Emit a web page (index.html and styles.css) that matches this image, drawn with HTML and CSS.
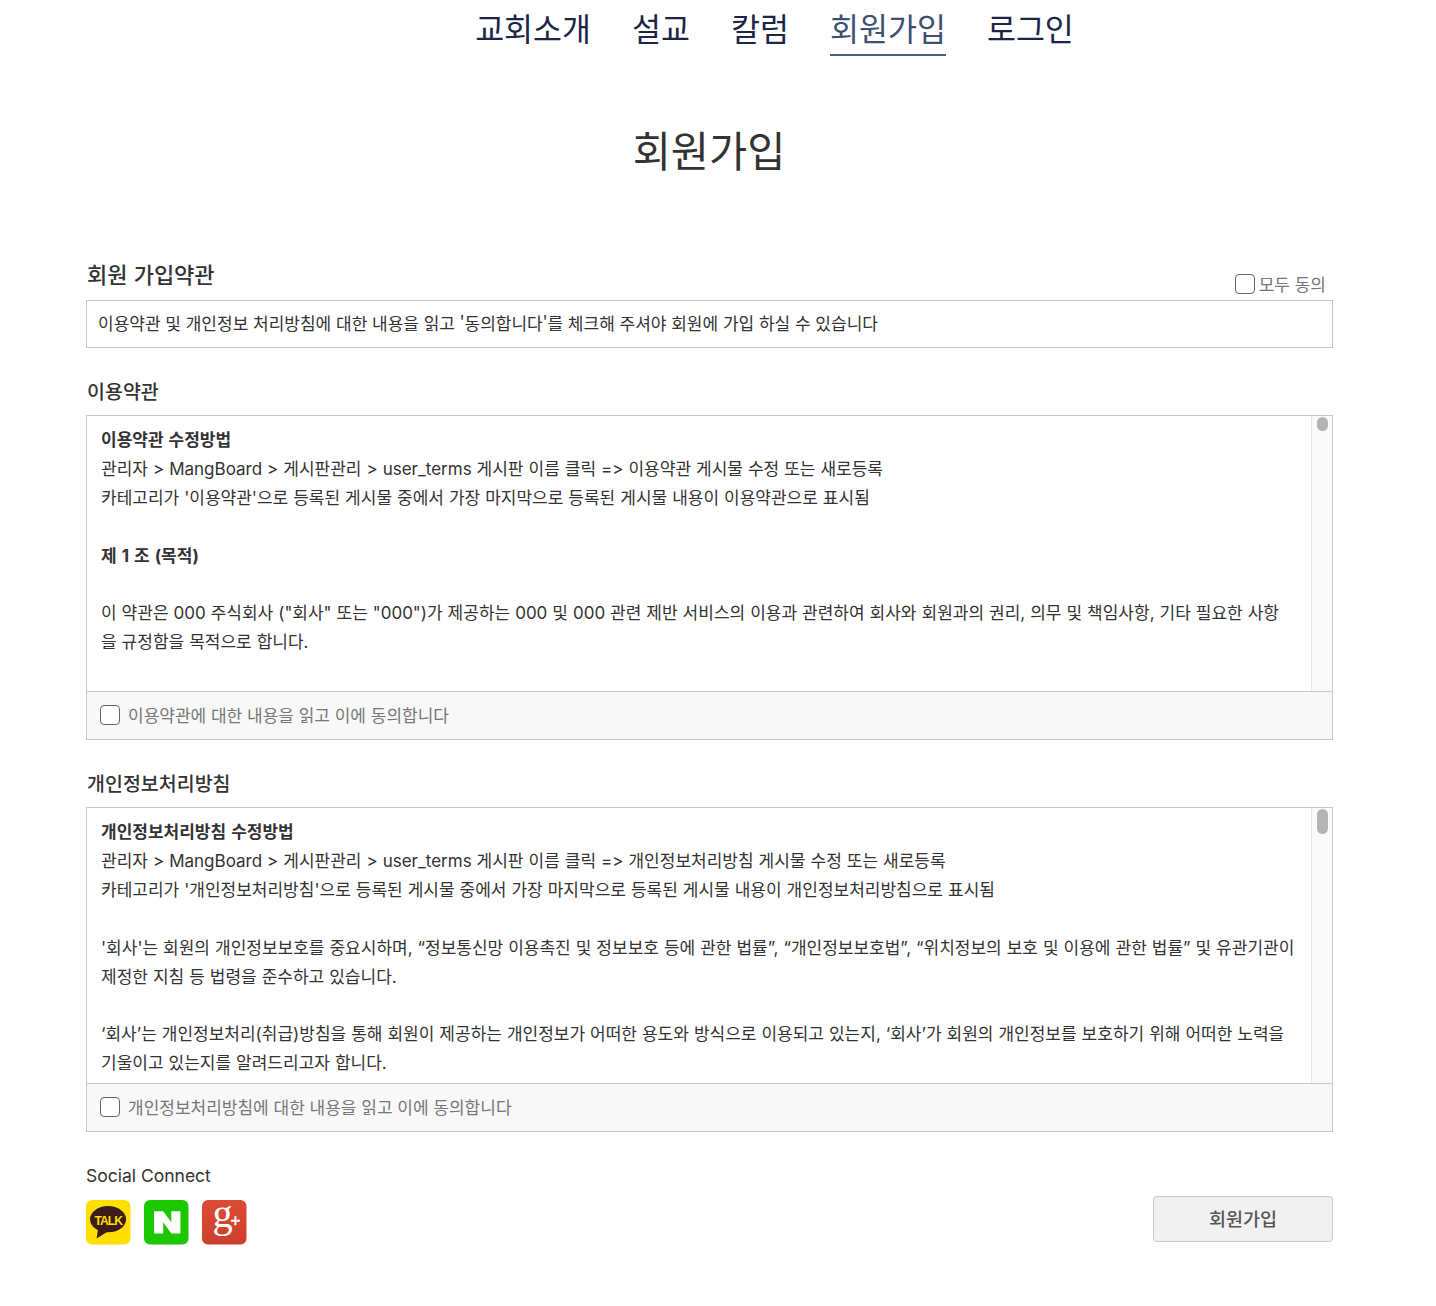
FILE: index.html
```html
<!DOCTYPE html>
<html lang="ko">
<head>
<meta charset="utf-8">
<title>회원가입</title>
<link rel="stylesheet" href="styles.css">
</head>
<body>
<nav class="nav">
  <a class="nav-item">교회소개</a>
  <a class="nav-item">설교</a>
  <a class="nav-item">칼럼</a>
  <a class="nav-item active">회원가입</a>
  <a class="nav-item">로그인</a>
</nav>
<h1 class="page-title">회원가입</h1>
<main class="content">
  <section class="terms-head">
    <div class="head-row">
      <h2 class="section-title lead-title">회원 가입약관</h2>
      <label class="all-agree"><span class="check small"></span>모두 동의</label>
    </div>
    <div class="notice">이용약관 및 개인정보 처리방침에 대한 내용을 읽고 '동의합니다'를 체크해 주셔야 회원에 가입 하실 수 있습니다</div>
  </section>

  <section class="terms">
    <h2 class="section-title">이용약관</h2>
    <div class="panel">
      <div class="scroll-row">
        <div class="scroll-body">
          <p><b>이용약관 수정방법</b><br>관리자 &gt; MangBoard &gt; 게시판관리 &gt; user_terms 게시판 이름 클릭 =&gt; 이용약관 게시물 수정 또는 새로등록<br>카테고리가 '이용약관'으로 등록된 게시물 중에서 가장 마지막으로 등록된 게시물 내용이 이용약관으로 표시됨</p>
          <p><b>제 1 조 (목적)</b></p>
          <p>이 약관은 000 주식회사 ("회사" 또는 "000")가 제공하는 000 및 000 관련 제반 서비스의 이용과 관련하여 회사와 회원과의 권리, 의무 및 책임사항, 기타 필요한 사항<br>을 규정함을 목적으로 합니다.</p>
        </div>
        <div class="scrollbar"><span class="thumb thumb-short"></span></div>
      </div>
      <label class="agree"><span class="check"></span>이용약관에 대한 내용을 읽고 이에 동의합니다</label>
    </div>
  </section>

  <section class="terms">
    <h2 class="section-title">개인정보처리방침</h2>
    <div class="panel">
      <div class="scroll-row">
        <div class="scroll-body">
          <p><b>개인정보처리방침 수정방법</b><br>관리자 &gt; MangBoard &gt; 게시판관리 &gt; user_terms 게시판 이름 클릭 =&gt; 개인정보처리방침 게시물 수정 또는 새로등록<br>카테고리가 '개인정보처리방침'으로 등록된 게시물 중에서 가장 마지막으로 등록된 게시물 내용이 개인정보처리방침으로 표시됨</p>
          <p>'회사'는 회원의 개인정보보호를 중요시하며, “정보통신망 이용촉진 및 정보보호 등에 관한 법률”, “개인정보보호법”, “위치정보의 보호 및 이용에 관한 법률” 및 유관기관이<br>제정한 지침 등 법령을 준수하고 있습니다.</p>
          <p>‘회사’는 개인정보처리(취급)방침을 통해 회원이 제공하는 개인정보가 어떠한 용도와 방식으로 이용되고 있는지, ‘회사’가 회원의 개인정보를 보호하기 위해 어떠한 노력을<br>기울이고 있는지를 알려드리고자 합니다.</p>
        </div>
        <div class="scrollbar"><span class="thumb thumb-long"></span></div>
      </div>
      <label class="agree"><span class="check"></span>개인정보처리방침에 대한 내용을 읽고 이에 동의합니다</label>
    </div>
  </section>

  <section class="foot">
    <div class="social">
      <div class="social-label">Social Connect</div>
      <div class="social-icons">
        <svg class="icon" viewBox="0 0 44 44" role="img" aria-label="KakaoTalk">
          <rect width="44" height="44" rx="6" fill="#ffde00"/>
          <ellipse cx="21.800" cy="19" rx="17.800" ry="13" fill="#3b1d1a"/>
          <path d="M12 28 L10.500 38 L22 31 Z" fill="#3b1d1a"/>
          <text x="22" y="24.800" class="talk">TALK</text>
        </svg>
        <svg class="icon" viewBox="0 0 44 44" role="img" aria-label="Naver">
          <rect width="44" height="44" rx="6" fill="#1ec800"/>
          <path d="M10 11 H19 L27 22 V11 H36 V33 H27 L19 22 V33 H10 Z" fill="#fff"/>
        </svg>
        <svg class="icon" viewBox="0 0 44 44" role="img" aria-label="Google Plus">
          <defs>
            <linearGradient id="gp" x1="0" y1="0" x2="0" y2="1">
              <stop offset="0" stop-color="#dc4b35"/>
              <stop offset="1" stop-color="#cd3f2c"/>
            </linearGradient>
          </defs>
          <rect width="44" height="44" rx="6" fill="url(#gp)"/>
          <text x="10.500" y="26.500" class="gplus">g</text>
          <path d="M32 16 h2 v3.500 h3.500 v2 h-3.500 v3.500 h-2 v-3.500 h-3.500 v-2 h3.500 Z" fill="#fff"/>
        </svg>
      </div>
    </div>
    <button class="submit" type="button">회원가입</button>
  </section>
</main>
</body>
</html>
```
FILE: styles.css
```css
* { box-sizing: border-box; }
html, body { margin: 0; padding: 0; background: #fff; }
body {
  font-family: "Noto Sans CJK KR", "Noto Sans", sans-serif;
  color: #333;
  height: 1306px;
  overflow: hidden;
}
.nav {
  display: flex;
  justify-content: center;
  gap: 41px;
  height: 56px;
  padding-left: 113px;
}
.nav-item {
  font-size: 31.500px;
  line-height: 54px;
  height: 56px;
  color: #1d2547;
}
.nav-item.active {
  color: #3d5170;
  border-bottom: 2px solid #4a5f7f;
}
.page-title {
  margin: 0;
  padding-top: 61px;
  padding-right: 18px;
  font-size: 41.500px;
  line-height: 64px;
  font-weight: 400;
  text-align: center;
  color: #333;
}
.content {
  margin: 0 103px 0 86px;
  padding-top: 79px;
}
.head-row {
  display: flex;
  justify-content: space-between;
  align-items: flex-end;
}
.section-title {
  margin: 0;
  padding-left: 1px;
  font-size: 19.500px;
  line-height: 32px;
  height: 40px;
  font-weight: 500;
  color: #333;
}
.lead-title {
  font-size: 22px;
  line-height: 26px;
}
.all-agree {
  display: flex;
  align-items: center;
  gap: 4px;
  font-size: 17px;
  line-height: 24px;
  color: #777;
  padding-right: 7px;
  margin-bottom: 4px;
}
.check {
  flex: none;
  width: 20px;
  height: 20px;
  border: 1.500px solid #666;
  border-radius: 4px;
  background: #fff;
}
.notice {
  height: 48px;
  border: 1px solid #c8c8c8;
  padding: 0 11px;
  font-size: 17px;
  line-height: 43px;
  color: #333;
}
.terms { margin-top: 27px; }
.panel { border: 1px solid #c8c8c8; }
.scroll-row {
  display: flex;
  height: 275px;
}
.scroll-body {
  flex: 1;
  min-width: 0;
  overflow: hidden;
  padding: 10px 10px 0 14px;
  font-family: "Inter", "Noto Sans CJK KR", sans-serif;
  font-size: 17px;
  line-height: 28.900px;
  word-spacing: 0.200px;
  color: #333;
}
.scroll-body p { margin: 0 0 28.900px; }
.scroll-body b { font-weight: 700; word-spacing: 1px; }
.scrollbar {
  flex: none;
  width: 21px;
  background: #fafafa;
  border-left: 1px solid #e6e6e6;
  display: flex;
  justify-content: center;
  padding-top: 1px;
}
.thumb {
  width: 11px;
  background: #b4b4b4;
  border-radius: 6px;
}
.thumb-short { height: 14px; }
.thumb-long { height: 25px; }
.agree {
  display: flex;
  align-items: center;
  gap: 8px;
  height: 48px;
  padding: 0 0 2px 13px;
  background: #f8f8f8;
  border-top: 1px solid #c8c8c8;
  font-size: 17px;
  color: #777;
}
.foot {
  margin-top: 30px;
  display: flex;
  justify-content: space-between;
  align-items: flex-end;
}
.social-label {
  font-family: "Inter", "Noto Sans", sans-serif;
  font-size: 17.500px;
  line-height: 28px;
  color: #333;
  margin-bottom: 10px;
}
.social-icons { display: flex; gap: 13.500px; }
.icon { width: 44.500px; height: 44.500px; display: block; overflow: visible; }
.talk {
  font-family: "Liberation Sans", sans-serif;
  font-weight: 700;
  font-size: 12px;
  letter-spacing: -1px;
  fill: #ffde00;
  text-anchor: middle;
}
.gplus {
  font-family: "Liberation Serif", serif;
  font-size: 40px;
  fill: #fff;
}
.submit {
  width: 180px;
  height: 46px;
  margin-bottom: 3px;
  padding: 0 0 2px;
  border: 1px solid #c8c8c8;
  border-radius: 4px;
  background: #f1f1f1;
  font-family: inherit;
  font-size: 18.500px;
  font-weight: 500;
  color: #555;
}
```
